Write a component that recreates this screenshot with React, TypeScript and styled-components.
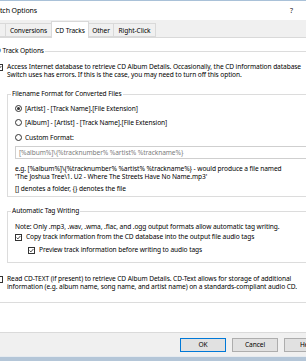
import React from "react";
import styled, { createGlobalStyle } from "styled-components";

const FONT = `"Noto Sans", "Open Sans", sans-serif`;

const Global = createGlobalStyle`
  html, body { margin: 0; padding: 0; background: #fff; }
  body { font-family: ${FONT}; font-size: 6.6px; letter-spacing: -0.08px; color: #000; overflow: hidden; }
  * { box-sizing: border-box; }
`;

const Screen = styled.div`
  width: 306px;
  height: 361px;
  overflow: hidden;
  display: flex;
  flex-direction: column;
  background: #fff;
  border-top: 1px solid #a9c1d8;
`;

const TitleBar = styled.div`
  height: 19px;
  flex: none;
  display: flex;
  align-items: center;
  justify-content: space-between;
  padding-right: 13px;
  background: #fff;
  white-space: nowrap;
`;

const Title = styled.span`
  margin-left: -11px;
  font-size: 7px;
`;

const HelpMark = styled.span`
  font-size: 7px;
  color: #222;
`;

const TabStrip = styled.div`
  height: 18px;
  flex: none;
  display: flex;
  align-items: flex-end;
  background: #f0f0f0;
  border-bottom: 1px solid #d9d9d9;
`;

const Tab = styled.div<{ $w: number; $active?: boolean; $edge?: boolean }>`
  flex: none;
  width: ${(p) => p.$w}px;
  height: ${(p) => (p.$active ? 17 : 14)}px;
  margin-bottom: ${(p) => (p.$active ? -1 : 0)}px;
  margin-left: ${(p) => (p.$edge ? -20 : -1)}px;
  display: flex;
  align-items: center;
  justify-content: ${(p) => (p.$edge ? "flex-end" : "center")};
  padding: ${(p) => (p.$active ? 0 : 1)}px ${(p) => (p.$edge ? 7 : 0)}px 0 0;
  background: ${(p) => (p.$active ? "#fff" : "#f0f0f0")};
  border: 1px solid #d9d9d9;
  border-bottom: ${(p) => (p.$active ? "none" : "1px solid #d9d9d9")};
  overflow: hidden;
  white-space: nowrap;
  position: relative;
  z-index: ${(p) => (p.$active ? 1 : 0)};
`;

const Panel = styled.div`
  flex: 1;
  min-height: 0;
  background: #fff;
  border-bottom: 1px solid #dadada;
  padding-top: 8px;
  overflow: hidden;
`;

const Group = styled.fieldset<{ $left: number; $bottom: number }>`
  margin: 0 -40px 0 ${(p) => p.$left}px;
  padding: 0 0 ${(p) => p.$bottom}px 0;
  min-width: 0;
  border: 1px solid #dcdcdc;
`;

const Legend = styled.legend`
  margin-left: 3px;
  padding: 0 1px;
  line-height: 10px;
  white-space: nowrap;
`;

const GroupBody = styled.div<{ $pad: number; $top: number }>`
  display: flex;
  flex-direction: column;
  padding-left: ${(p) => p.$pad}px;
  padding-top: ${(p) => p.$top}px;
`;

const CheckRow = styled.div<{ $indent?: number; $mt?: number }>`
  display: flex;
  align-items: flex-start;
  gap: 4px;
  margin-left: ${(p) => p.$indent ?? 0}px;
  margin-top: ${(p) => p.$mt ?? 0}px;
  line-height: 8px;
  white-space: nowrap;
`;

const Box = styled.span`
  flex: none;
  width: 7px;
  height: 7px;
  margin-top: 1px;
  border: 1px solid #333;
  background: #fff;
  display: flex;
  align-items: center;
  justify-content: center;
`;

const RadioRow = styled.div<{ $mt?: number }>`
  display: flex;
  align-items: center;
  gap: 3px;
  height: 10px;
  margin-top: ${(p) => p.$mt ?? 0}px;
  white-space: nowrap;
`;

const RadioCircle = styled.span<{ $on?: boolean }>`
  flex: none;
  width: 7px;
  height: 7px;
  border-radius: 50%;
  border: 1px solid #333;
  background: #fff;
  display: flex;
  align-items: center;
  justify-content: center;
  &::after {
    content: "";
    width: 3px;
    height: 3px;
    border-radius: 50%;
    background: ${(p) => (p.$on ? "#333" : "transparent")};
  }
`;

const FormatInput = styled.div`
  margin-top: 4px;
  margin-right: 46px;
  height: 13px;
  border: 1px solid #cfcfcf;
  color: #7d7d7d;
  display: flex;
  align-items: center;
  padding-left: 3px;
  white-space: nowrap;
`;

const Lines = styled.div<{ $mt: number }>`
  margin-top: ${(p) => p.$mt}px;
  line-height: 8px;
  white-space: nowrap;
`;

const SubGroupWrap = styled.div<{ $mt: number }>`
  margin-top: ${(p) => p.$mt}px;
`;

const ButtonBar = styled.div`
  height: 23px;
  flex: none;
  background: #f0f0f0;
  display: flex;
  align-items: center;
  gap: 6px;
  padding-left: 180px;
`;

const Button = styled.div<{ $default?: boolean }>`
  flex: none;
  width: 46px;
  height: 14px;
  background: #e1e1e1;
  border: 1px solid ${(p) => (p.$default ? "#0078d7" : "#adadad")};
  display: flex;
  align-items: center;
  justify-content: center;
`;

const BottomEdge = styled.div`
  height: 5px;
  flex: none;
  background: #b4c6d8;
  border-top: 1px solid #e6ebf0;
`;

const Check = ({ on = true }: { on?: boolean }) => (
  <Box>
    {on && (
      <svg width="5" height="5" viewBox="0 0 5 5">
        <path d="M0.6 2.6 L1.9 3.9 L4.4 1" fill="none" stroke="#333" strokeWidth="0.9" />
      </svg>
    )}
  </Box>
);

export default function App() {
  return (
    <>
      <Global />
      <Screen>
        <TitleBar>
          <Title>Switch Options</Title>
          <HelpMark>?</HelpMark>
        </TitleBar>
        <TabStrip>
          <Tab $w={26} $edge>General</Tab>
          <Tab $w={47}>Conversions</Tab>
          <Tab $w={38} $active>CD Tracks</Tab>
          <Tab $w={26}>Other</Tab>
          <Tab $w={43}>Right-Click</Tab>
        </TabStrip>
        <Panel>
          <Group $left={-13} $bottom={11}>
            <Legend>CD Track Options</Legend>
            <GroupBody $pad={8} $top={7}>
              <CheckRow>
                <Check />
                <span>
                  Access Internet database to retrieve CD Album Details. Occasionally, the CD information database
                  <br />
                  Switch uses has errors. If this is the case, you may need to turn off this option.
                </span>
              </CheckRow>
              <SubGroupWrap $mt={10}>
                <Group $left={11} $bottom={3}>
                  <Legend>Filename Format for Converted Files</Legend>
                  <GroupBody $pad={7} $top={4}>
                    <RadioRow>
                      <RadioCircle $on />
                      <span>[Artist] - [Track Name].[File Extension]</span>
                    </RadioRow>
                    <RadioRow $mt={4.5}>
                      <RadioCircle />
                      <span>[Album] - [Artist] - [Track Name].[File Extension]</span>
                    </RadioRow>
                    <RadioRow $mt={4.5}>
                      <RadioCircle />
                      <span>Custom Format:</span>
                    </RadioRow>
                    <FormatInput>[%album%]\{"{"}%tracknumber% %artist% %trackname%{"}"}</FormatInput>
                    <Lines $mt={6}>
                      e.g. [%album%]\{"{"}%tracknumber% %artist% %trackname%{"}"} - would produce a file named
                      <br />
                      'The Joshua Tree\1. U2 - Where The Streets Have No Name.mp3'
                    </Lines>
                    <Lines $mt={4}>[] denotes a folder, {"{}"} denotes the file</Lines>
                  </GroupBody>
                </Group>
              </SubGroupWrap>
              <SubGroupWrap $mt={9}>
                <Group $left={11} $bottom={8}>
                  <Legend>Automatic Tag Writing</Legend>
                  <GroupBody $pad={7} $top={7}>
                    <Lines $mt={0}>
                      Note: Only .mp3, .wav, .wma, .flac, and .ogg output formats allow automatic tag writing.
                    </Lines>
                    <CheckRow $mt={2}>
                      <Check />
                      <span>Copy track information from the CD database into the output file audio tags</span>
                    </CheckRow>
                    <CheckRow $mt={5} $indent={13}>
                      <Check />
                      <span>Preview track information before writing to audio tags</span>
                    </CheckRow>
                  </GroupBody>
                </Group>
              </SubGroupWrap>
              <CheckRow $mt={12}>
                <Check on={false} />
                <span>
                  Read CD-TEXT (if present) to retrieve CD Album Details. CD-Text allows for storage of additional
                  <br />
                  information (e.g. album name, song name, and artist name) on a standards-compliant audio CD.
                </span>
              </CheckRow>
            </GroupBody>
          </Group>
        </Panel>
        <ButtonBar>
          <Button $default>OK</Button>
          <Button>Cancel</Button>
          <Button>Help</Button>
        </ButtonBar>
        <BottomEdge />
      </Screen>
    </>
  );
}
